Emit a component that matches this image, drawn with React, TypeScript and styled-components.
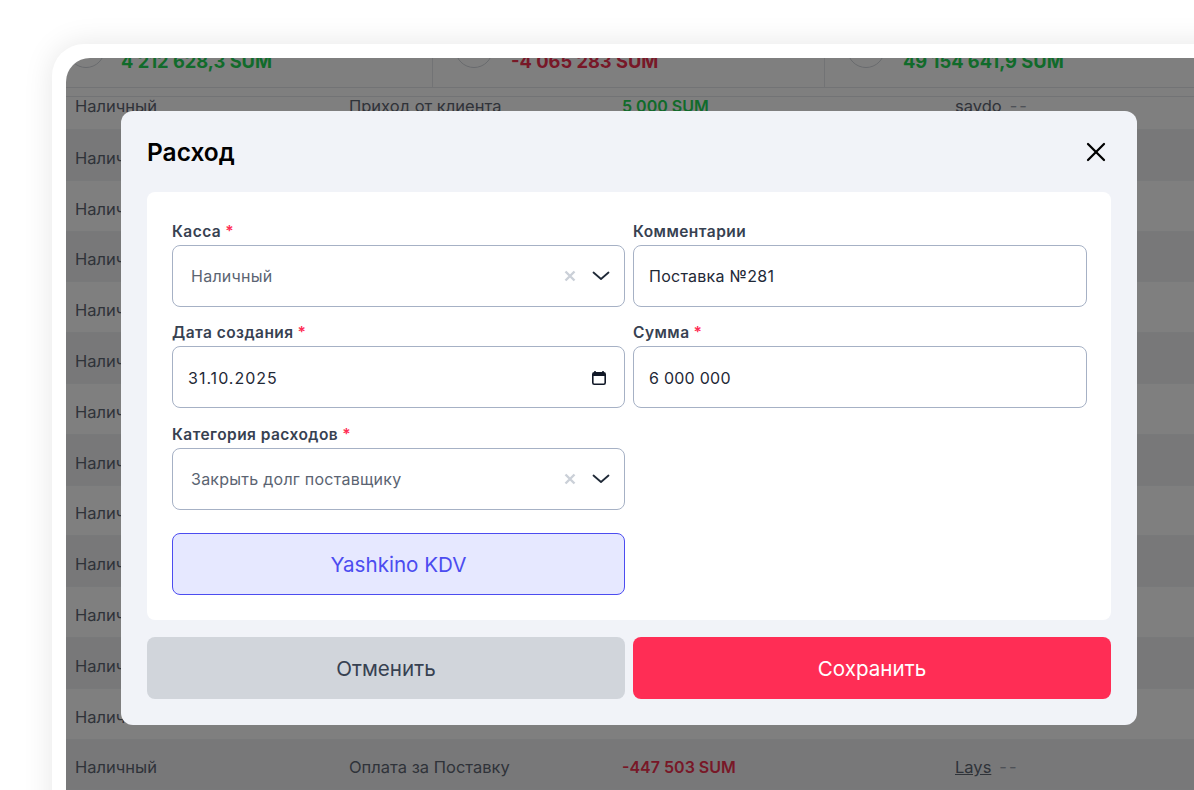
import React from 'react';
import styled, { createGlobalStyle } from 'styled-components';
import { X } from 'lucide-react';

const GlobalStyle = createGlobalStyle`
  html, body {
    margin: 0;
    height: 100%;
    background: #ffffff;
    font-family: Inter, "Noto Sans", "Liberation Sans", sans-serif;
    overflow: hidden;
  }
  * { box-sizing: border-box; }
`;

const Page = styled.div`
  width: 1194px;
  height: 790px;
  padding: 44px 0 0 52px;
  overflow: hidden;
`;

const Device = styled.div`
  width: 1200px;
  height: 800px;
  padding: 14px 0 0 14px;
  background: #ffffff;
  border-radius: 32px 0 0 0;
  box-shadow: 0 0 30px rgba(0, 0, 0, 0.1);
`;

const Screen = styled.div`
  position: relative;
  height: 100%;
  background: #ffffff;
  border-radius: 24px 0 0 0;
  overflow: hidden;
`;

const Stats = styled.div`
  display: flex;
  height: 30px;
  overflow: hidden;
  border-bottom: 1px solid #e5e7eb;
`;

const StatCell = styled.div`
  flex: none;
  width: ${({ $width }: { $width: number }) => $width}px;
  display: flex;
  align-items: flex-end;
  gap: 18px;
  padding: 0 0 19px 22px;
  border-right: 1px solid #e5e7eb;

  &:first-child {
    gap: 16px;
    padding-left: 1px;
  }
`;

const StatCircle = styled.span`
  flex: none;
  width: 38px;
  height: 38px;
  border: 1px solid #d1d5db;
  border-radius: 50%;
`;

const StatValue = styled.span<{ $tone: 'plus' | 'minus' }>`
  font-size: 18.3px;
  line-height: 18px;
  margin-bottom: -2px;
  font-weight: 700;
  white-space: nowrap;
  color: ${({ $tone }) => ($tone === 'plus' ? '#22d655' : '#f0304f')};
`;

const Strip = styled.div`
  height: 9px;
  border-bottom: 1px solid #e5e7eb;
`;

const Row = styled.div<{ $clipped?: boolean; $shade?: boolean }>`
  display: grid;
  grid-template-columns: 274px 273px 333px 1fr;
  align-items: ${({ $clipped }) => ($clipped ? 'start' : 'center')};
  height: ${({ $clipped }) => ($clipped ? '33px' : '50.8px')};
  padding: ${({ $clipped }) => ($clipped ? '0 0 0 9px' : '6px 0 0 9px')};
  background: ${({ $shade }) => ($shade ? '#f0f1f3' : '#ffffff')};
  border-bottom: 1px solid #f1f2f4;
  font-size: 16.5px;
  line-height: ${({ $clipped }) => ($clipped ? '18px' : '20px')};
  color: #5f6673;
`;

const Amount = styled.span<{ $tone: 'plus' | 'minus' }>`
  font-size: 16px;
  font-weight: 600;
  color: ${({ $tone }) => ($tone === 'plus' ? '#22d655' : '#f0304f')};
`;

const Owner = styled.span`
  display: flex;
  gap: 8px;
`;

const OwnerLink = styled.span`
  text-decoration: underline;
`;

const Dash = styled.span`
  color: #9ca3af;
  letter-spacing: 2px;
`;

const Overlay = styled.div`
  position: absolute;
  inset: 0;
  padding: 53px 0 0 55px;
  background: rgba(0, 0, 0, 0.5);
`;

const Modal = styled.div`
  width: 1016px;
  height: 614px;
  padding: 0 26px;
  background: #f1f3f8;
  border-radius: 12px;
  display: flex;
  flex-direction: column;
`;

const ModalHeader = styled.div`
  height: 81px;
  display: flex;
  align-items: center;
  justify-content: space-between;
`;

const ModalTitle = styled.h2`
  margin: 0;
  font-size: 24.5px;
  font-weight: 600;
  color: #000000;
`;

const CloseButton = styled.button`
  display: flex;
  margin-right: -1px;
  padding: 0;
  border: 0;
  background: none;
  color: #000000;
`;

const Card = styled.div`
  height: 428px;
  padding: 29px 25px 0;
  background: #ffffff;
  border-radius: 8px;
  display: grid;
  grid-template-columns: 453px 454px;
  grid-template-rows: 101px 102px 109px 62px;
  column-gap: 8px;
  align-content: start;
`;

const Group = styled.div`
  display: flex;
  flex-direction: column;
  gap: 5px;
`;

const Label = styled.label`
  height: 19px;
  font-size: 15.5px;
  letter-spacing: 0.45px;
  line-height: 21px;
  font-weight: 600;
  color: #374151;
`;

const Star = styled.span`
  color: #ff2d55;
  margin-left: 4px;
`;

const Field = styled.div<{ $inset: number; $low?: boolean }>`
  height: 62px;
  display: flex;
  align-items: center;
  padding: ${({ $low }) => ($low ? '2px' : '0')} 14px 0 ${({ $inset }) => $inset}px;
  background: #ffffff;
  border: 1px solid #a6b1c5;
  border-radius: 8px;
  font-size: 16px;
  color: #1f2937;
`;

const FieldValue = styled.span<{ $muted?: boolean; $date?: boolean }>`
  flex: 1;
  letter-spacing: ${({ $date }) => ($date ? '1px' : '0.25px')};
  color: ${({ $muted }) => ($muted ? '#5b6472' : '#1f2937')};
`;

const Clear = styled.svg`
  margin-right: 16px;
`;

const CalendarSvg = styled.svg`
  margin-right: 3px;
`;

const SupplierButton = styled.button`
  grid-column: 1;
  height: 62px;
  padding-top: 1px;
  border: 1px solid #4c4cf0;
  border-radius: 8px;
  background: #e6e8ff;
  color: #4c4cf0;
  font-family: inherit;
  font-size: 20.6px;
`;

const Actions = styled.div`
  display: grid;
  grid-template-columns: 478px 478px;
  column-gap: 8px;
  margin-top: 17px;
`;

const ActionButton = styled.button<{ $primary?: boolean }>`
  height: 62px;
  padding-top: 2px;
  border: 0;
  border-radius: 8px;
  font-family: inherit;
  font-size: 20.6px;
  background: ${({ $primary }) => ($primary ? '#ff2d55' : '#d1d5db')};
  color: ${({ $primary }) => ($primary ? '#ffffff' : '#374151')};
`;

const Chevron = () => (
  <svg width="18" height="10" viewBox="0 0 18 10" fill="none">
    <path d="M1.5 1.5 9 8l7.5-6.5" stroke="#1f2937" strokeWidth="1.8" strokeLinecap="round" strokeLinejoin="round" />
  </svg>
);

const CalendarIcon = () => (
  <CalendarSvg width="16" height="16" viewBox="0 0 16 16" fill="none">
    <path d="M4 1v2M12 1v2" stroke="#111827" strokeWidth="1.6" />
    <rect x="1.8" y="2.8" width="12.4" height="11.4" rx="1.4" stroke="#111827" strokeWidth="1.6" />
    <rect x="2" y="3" width="12" height="3" fill="#111827" />
  </CalendarSvg>
);

const SelectField = ({ value }: { value: string }) => (
  <Field $inset={18}>
    <FieldValue $muted>{value}</FieldValue>
    <Clear width="12" height="12" viewBox="0 0 12 12">
      <path d="M1.5 1.5l9 9M10.5 1.5l-9 9" stroke="#cbd0d8" strokeWidth="2.4" />
    </Clear>
    <Chevron />
  </Field>
);

const shadedRows = [
  true, false, true, false, true, false, true, false, true, false, true, false,
];

const App: React.FC = () => {
  return (
    <>
      <GlobalStyle />
      <Page>
        <Device>
          <Screen>
            <Stats>
              <StatCell $width={367}>
                <StatCircle />
                <StatValue $tone="plus">4 212 628,3 SUM</StatValue>
              </StatCell>
              <StatCell $width={392}>
                <StatCircle />
                <StatValue $tone="minus">-4 065 283 SUM</StatValue>
              </StatCell>
              <StatCell $width={392}>
                <StatCircle />
                <StatValue $tone="plus">49 154 641,9 SUM</StatValue>
              </StatCell>
            </Stats>
            <Strip />
            <Row $clipped>
              <span>Наличный</span>
              <span>Приход от клиента</span>
              <Amount $tone="plus">5 000 SUM</Amount>
              <Owner>
                <span>savdo</span>
                <Dash>--</Dash>
              </Owner>
            </Row>
            {shadedRows.map((shade, i) => (
              <Row key={i} $shade={shade}>
                <span>Наличный</span>
              </Row>
            ))}
            <Row $shade>
              <span>Наличный</span>
              <span>Оплата за Поставку</span>
              <Amount $tone="minus">-447 503 SUM</Amount>
              <Owner>
                <OwnerLink>Lays</OwnerLink>
                <Dash>--</Dash>
              </Owner>
            </Row>
            <Overlay>
              <Modal>
                <ModalHeader>
                  <ModalTitle>Расход</ModalTitle>
                  <CloseButton>
                    <X size={32} strokeWidth={1.7} />
                  </CloseButton>
                </ModalHeader>
                <Card>
                  <Group>
                    <Label>Касса<Star>*</Star></Label>
                    <SelectField value="Наличный" />
                  </Group>
                  <Group>
                    <Label>Комментарии</Label>
                    <Field $inset={15}>
                      <FieldValue>Поставка №281</FieldValue>
                    </Field>
                  </Group>
                  <Group>
                    <Label>Дата создания<Star>*</Star></Label>
                    <Field $inset={15} $low>
                      <FieldValue $date>31.10.2025</FieldValue>
                      <CalendarIcon />
                    </Field>
                  </Group>
                  <Group>
                    <Label>Сумма<Star>*</Star></Label>
                    <Field $inset={15} $low>
                      <FieldValue>6 000 000</FieldValue>
                    </Field>
                  </Group>
                  <Group>
                    <Label>Категория расходов<Star>*</Star></Label>
                    <SelectField value="Закрыть долг поставщику" />
                  </Group>
                  <div />
                  <SupplierButton>Yashkino KDV</SupplierButton>
                </Card>
                <Actions>
                  <ActionButton>Отменить</ActionButton>
                  <ActionButton $primary>Сохранить</ActionButton>
                </Actions>
              </Modal>
            </Overlay>
          </Screen>
        </Device>
      </Page>
    </>
  );
};

export default App;
